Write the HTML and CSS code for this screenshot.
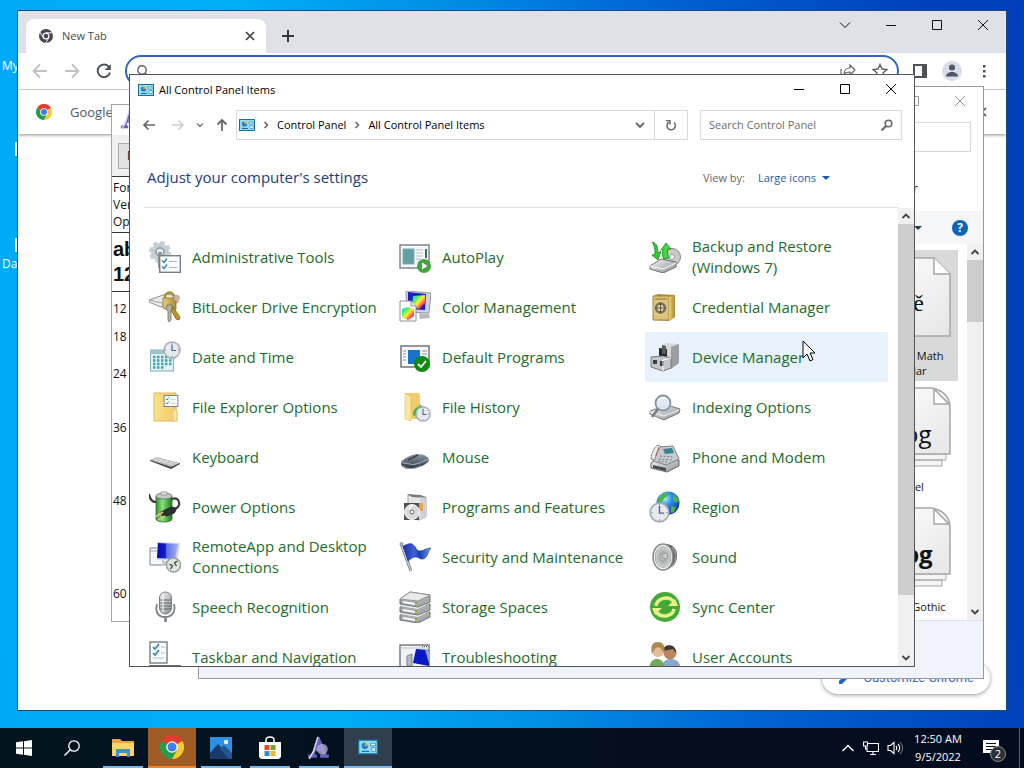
FILE: index.html
```
<!DOCTYPE html>
<html lang="en">
<head>
    <meta charset="UTF-8">
    <meta name="viewport" content="width=device-width, initial-scale=1.0">
    <title>All Control Panel Items</title>
    <link rel="stylesheet" href="styles.css">
</head>
<body>
    <!-- shared gradients and symbols -->
    <svg class="defs" aria-hidden="true">
        <defs>
            <linearGradient id="gSilver" x1="0" y1="0" x2="1" y2="1"><stop offset="0" stop-color="#f6f6f6"/><stop offset="1" stop-color="#8b8f94"/></linearGradient>
            <linearGradient id="gPage" x1="0" y1="0" x2="1" y2="1"><stop offset="0" stop-color="#fff"/><stop offset="1" stop-color="#e6e6e8"/></linearGradient>
            <linearGradient id="gGold" x1="0" y1="0" x2="1" y2="0"><stop offset="0" stop-color="#e8cf7d"/><stop offset="1" stop-color="#a98a35"/></linearGradient>
            <linearGradient id="gFolder" x1="0" y1="0" x2="1" y2="0"><stop offset="0" stop-color="#fbe08a"/><stop offset="1" stop-color="#f0cc69"/></linearGradient>
            <linearGradient id="gScreen" x1="0" y1="0" x2="1" y2="0"><stop offset="0" stop-color="#0408a8"/><stop offset=".4" stop-color="#1420d0"/><stop offset=".45" stop-color="#5a70e4"/><stop offset="1" stop-color="#a4b4f6"/></linearGradient>
            <linearGradient id="gGreen" x1="0" y1="0" x2="1" y2="0"><stop offset="0" stop-color="#2f8f2c"/><stop offset=".4" stop-color="#8be07c"/><stop offset="1" stop-color="#1f7a20"/></linearGradient>
            <linearGradient id="gFlag" x1="0" y1="0" x2="1" y2="0"><stop offset="0" stop-color="#1c30a4"/><stop offset=".4" stop-color="#3a63d8"/><stop offset=".6" stop-color="#1c3cae"/><stop offset="1" stop-color="#69a0ee"/></linearGradient>
            <linearGradient id="gRainbow" x1="0" y1="0" x2="1" y2="1"><stop offset="0" stop-color="#18c8ff"/><stop offset=".3" stop-color="#50f060"/><stop offset=".5" stop-color="#fff03c"/><stop offset=".75" stop-color="#ff4a4a"/><stop offset="1" stop-color="#f030d0"/></linearGradient>
            <linearGradient id="gMouse" x1="0" y1="0" x2="0" y2="1"><stop offset="0" stop-color="#8e9cab"/><stop offset="1" stop-color="#2c343c"/></linearGradient>
            <radialGradient id="gGlobe" cx=".35" cy=".3" r=".8"><stop offset="0" stop-color="#b6f2ff"/><stop offset=".4" stop-color="#2f8ce8"/><stop offset="1" stop-color="#082a94"/></radialGradient>
            <radialGradient id="gCone"><stop offset="0" stop-color="#f4f4f4"/><stop offset=".35" stop-color="#a5a9a8"/><stop offset="1" stop-color="#d3d5d4"/></radialGradient>
            <symbol id="panel" viewBox="0 0 16 14">
                <rect x=".5" y="1.5" width="15" height="11" fill="#8fdcf8" stroke="#1b6f9f"/>
                <circle cx="5.5" cy="6" r="2.7" fill="#fff"/><path d="M5.500 6V3.300a2.700 2.700 0 0 1 2.700 2.700z" fill="#e4a12c"/><path d="M5.500 6h2.700a2.700 2.700 0 1 1-2.700-2.700z" fill="#2a7fc0"/>
                <path d="M10 4h4v2h-4zM11 7.500h3v3h-3z" fill="#e9f9ff" stroke="#3c8fb8" stroke-width=".7"/><path d="M3 10.500h6" stroke="#1b6f9f"/>
            </symbol>
            <symbol id="chrome" viewBox="0 0 24 24">
                <path d="M12 12 1.600 6A12 12 0 0 1 22.400 6z" fill="#e53a2e"/><path d="M12 12 1.600 6A12 12 0 0 0 12 24l5-9z" fill="#279c4e"/><path d="M12 12 22.400 6A12 12 0 0 1 12 24l5-9z" fill="#fbc92d"/>
                <circle cx="12" cy="12" r="5.800" fill="#fff"/><circle cx="12" cy="12" r="4.500" fill="#3f7ff0"/>
            </symbol>
            <symbol id="min" viewBox="0 0 12 12"><path d="M1 6.500h10" stroke="currentColor"/></symbol>
            <symbol id="max" viewBox="0 0 12 12"><path d="M1.500 1.500h9v9h-9z" fill="none" stroke="currentColor"/></symbol>
            <symbol id="close" viewBox="0 0 12 12"><path d="M1 1l10 10M11 1 1 11" stroke="currentColor"/></symbol>
            <symbol id="clock" viewBox="0 0 18 18"><circle cx="9" cy="9" r="8" fill="#e6eaef" stroke="#a6acb6" stroke-width="1.500"/><path d="M9 3.500V9.500h4" fill="none" stroke="#4e6480" stroke-width="1.200"/><path d="M9 2v1M9 15v1M2 9h1M15 9h1" stroke="#888"/></symbol>
            <symbol id="checks" viewBox="0 0 22 18"><rect x=".7" y=".7" width="20.600" height="16.600" fill="#fafdff" stroke="#777e86" stroke-width="1.400"/><path d="M3 5.500l2 2 3-4M3 11.500l2 2 3-4" fill="none" stroke="#2d82b4" stroke-width="1.400"/><path d="M10 6.500h8M10 12.500h8" stroke="#aab4c0"/></symbol>
            <symbol id="fontpage" viewBox="0 0 84 84">
                <path d="M2 2h64l16 16v62H2z" fill="url(#gPage)" stroke="#a6a6a8" stroke-width="1.500"/><path d="M66 2v16h16" fill="#fff" stroke="#a6a6a8" stroke-width="1.500"/>
            </symbol>
            <symbol id="fontstack" viewBox="0 0 84 84">
                <path d="M10 73h64v6H10zM6 67h72v6H6z" fill="#f4f4f4" stroke="#a6a6a8"/>
                <path d="M2 1h62q18 4 18 20v46H2z" fill="url(#gPage)" stroke="#a6a6a8" stroke-width="1.500"/><path d="M66 2v15h15z" fill="#fff" stroke="#a6a6a8" stroke-width="1.500"/>
            </symbol>
            <symbol id="afont" viewBox="0 0 20 22">
                <path d="M10 0 3 17H0v3h8v-3H6l1-3h5l1 3h-2v3h8v-3h-2z" fill="#6a60c0"/><circle cx="13" cy="12" r="5" fill="#b0a8d8" opacity=".8"/><path d="M9 1 5 14l-4 7" stroke="#d8d4f0" stroke-width="1.500" fill="none"/>
            </symbol>
        </defs>
    </svg>

    <main class="desktop">
        <!-- desktop shortcuts -->
        <ul class="shortcuts">
            <li><span class="shortcut-label">My files</span></li>
            <li><span class="shortcut-icon"></span></li>
            <li><span class="shortcut-icon"></span><span class="shortcut-label">Data</span></li>
        </ul>

        <!-- browser -->
        <section class="window browser">
            <div class="tab-strip">
                <div class="tab">
                    <svg class="i14" viewBox="0 0 24 24"><circle cx="12" cy="12" r="12" fill="#45494d"/><circle cx="12" cy="12" r="6" fill="#fff"/><circle cx="12" cy="12" r="4" fill="#45494d"/><path d="M12 6.500h11M7.200 14.800 1.800 5.500M16.800 14.800 11.500 24" stroke="#fff" stroke-width="1.600"/></svg>
                    <span class="tab-title">New Tab</span>
                    <button class="plain" aria-label="Close tab"><svg class="i12" viewBox="0 0 12 12"><path d="M2 2l8 8M10 2l-8 8" stroke="#3c4043" stroke-width="1.700"/></svg></button>
                </div>
                <button class="plain new-tab" aria-label="New tab"><svg class="i14" viewBox="0 0 14 14"><path d="M7 1v12M1 7h12" stroke="#33373b" stroke-width="2"/></svg></button>
                <div class="window-buttons">
                    <button aria-label="Search tabs"><svg class="i12" viewBox="0 0 12 12"><path d="M1 3.500l5 5 5-5" fill="none" stroke="currentColor"/></svg></button>
                    <button aria-label="Minimize"><svg class="i12"><use href="#min"/></svg></button>
                    <button aria-label="Maximize"><svg class="i12"><use href="#max"/></svg></button>
                    <button aria-label="Close"><svg class="i12"><use href="#close"/></svg></button>
                </div>
            </div>
            <div class="toolbar">
                <button class="plain tool" aria-label="Back"><svg class="i16" viewBox="0 0 16 16"><path d="M15 8H2M8 1.500 1.500 8 8 14.500" fill="none" stroke="#bdc1c4" stroke-width="1.800"/></svg></button>
                <button class="plain tool" aria-label="Forward"><svg class="i16" viewBox="0 0 16 16"><path d="M1 8h13M8 1.500 14.500 8 8 14.500" fill="none" stroke="#bdc1c4" stroke-width="1.800"/></svg></button>
                <button class="plain tool" aria-label="Reload"><svg class="i16" viewBox="0 0 16 16"><path d="M13 4A6.300 6.300 0 1 0 14 9.500" fill="none" stroke="#4d5256" stroke-width="1.900"/><path d="M14.800 1v6H8.800z" fill="#4d5256"/></svg></button>
                <div class="omnibox">
                    <svg class="i14" viewBox="0 0 14 14"><circle cx="6" cy="6" r="4.200" fill="none" stroke="#5f6368" stroke-width="1.400"/><path d="M9 9l4 4" stroke="#5f6368" stroke-width="1.600"/></svg>
                    <input type="text" aria-label="Address">
                    <svg class="i16" viewBox="0 0 16 16"><path d="M1 6v9h12M4 11c0-4 3-6 6-6V2l5 5-5 5V9c-3 0-4.500.500-6 2z" fill="none" stroke="#5f6368" stroke-width="1.200"/></svg>
                    <svg class="i16" viewBox="0 0 16 16"><path d="M8 1.500l2 4.500 5 .500-3.800 3.300L12.400 15 8 12.200 3.600 15l1.200-5.200L1 6.500 6 6z" fill="none" stroke="#5f6368" stroke-width="1.400"/></svg>
                </div>
                <button class="plain tool" aria-label="Side panel"><svg class="i14" viewBox="0 0 14 14"><path d="M1 1h12v12H1z" fill="#fff" stroke="#4d5256" stroke-width="2"/><path d="M9 1h4v12H9z" fill="#4d5256"/></svg></button>
                <button class="plain tool avatar" aria-label="Profile"><svg class="i20" viewBox="0 0 20 20"><circle cx="10" cy="10" r="10" fill="#dadde8"/><circle cx="10" cy="6.500" r="3" fill="#4f5565"/><path d="M4 15.500c0-6 12-6 12 0z" fill="#4f5565"/></svg></button>
                <button class="plain tool" aria-label="Menu"><svg class="i14" viewBox="0 0 14 14"><path d="M6 1h2.500v2.500H6zM6 6h2.500v2.500H6zM6 11h2.500v2.500H6z" fill="#4d5256"/></svg></button>
            </div>
            <div class="infobar">
                <svg class="i16"><use href="#chrome"/></svg>
                <span>Google Chrome</span>
                <button class="plain infobar-close" aria-label="Dismiss"><svg class="i12" viewBox="0 0 12 12"><path d="M2 2l8 8M10 2l-8 8" stroke="#4d5256" stroke-width="1.700"/></svg></button>
            </div>
            <div class="page">
                <button class="customize"><svg class="i14" viewBox="0 0 14 14"><path d="M1 13V10l8-8 3 3-8 8z" fill="#1967d2"/></svg>Customize Chrome</button>
            </div>
        </section>

        <!-- font preview -->
        <section class="window preview">
            <div class="preview-title"><svg class="i20"><use href="#afont"/></svg></div>
            <div class="preview-bar"><button>Print</button></div>
            <div class="preview-meta">
                <p>Font</p>
                <p>Version</p>
                <p>OpenType</p>
            </div>
            <div class="preview-sample">
                <p>abcdef</p>
                <p>123456</p>
            </div>
            <ul class="preview-sizes">
                <li class="s12">12</li>
                <li class="s18">18</li>
                <li class="s24">24</li>
                <li class="s36">36</li>
                <li class="s48">48</li>
                <li class="s60">60</li>
            </ul>
        </section>

        <!-- fonts folder -->
        <section class="window fonts">
            <div class="title-bar inactive">
                <div class="window-buttons">
                    <button aria-label="Maximize"><svg class="i12"><use href="#max"/></svg></button>
                    <button aria-label="Close"><svg class="i12"><use href="#close"/></svg></button>
                </div>
            </div>
            <div class="fonts-nav"><input type="text" aria-label="Search Fonts"></div>
            <div class="fonts-head">computer</div>
            <div class="fonts-tools">
                <svg class="i8" viewBox="0 0 8 8"><path d="M0 2h8L4 6z" fill="#243a52"/></svg>
                <button class="help" aria-label="Help">?</button>
            </div>
            <div class="fonts-body">
                <div class="fonts-list">
                    <figure class="font selected">
                        <div class="font-icon"><svg><use href="#fontpage"/></svg><span class="glyph serif">Áě</span></div>
                        <figcaption>Cambria Math<br>Regular</figcaption>
                    </figure>
                    <figure class="font">
                        <div class="font-icon"><svg><use href="#fontstack"/></svg><span class="glyph">Abg</span></div>
                        <figcaption>Corbel</figcaption>
                    </figure>
                    <figure class="font">
                        <div class="font-icon"><svg><use href="#fontstack"/></svg><span class="glyph bold">Abg</span></div>
                        <figcaption>Franklin Gothic</figcaption>
                    </figure>
                </div>
                <div class="scrollbar">
                    <svg class="i16" viewBox="0 0 16 16"><path d="M4.500 10 8 6.500 11.500 10" fill="none" stroke="#444" stroke-width="1.800"/></svg>
                    <div class="track"><div class="thumb thumb-short"></div></div>
                    <svg class="i16" viewBox="0 0 16 16"><path d="M4.500 6 8 9.500 11.500 6" fill="none" stroke="#444" stroke-width="1.800"/></svg>
                </div>
            </div>
            <div class="fonts-details"></div>
        </section>

        <!-- control panel -->
        <section class="window control-panel">
            <div class="title-bar">
                <svg class="i16"><use href="#panel"/></svg>
                <span>All Control Panel Items</span>
                <div class="window-buttons">
                    <button aria-label="Minimize"><svg class="i12"><use href="#min"/></svg></button>
                    <button aria-label="Maximize"><svg class="i12"><use href="#max"/></svg></button>
                    <button aria-label="Close"><svg class="i12"><use href="#close"/></svg></button>
                </div>
            </div>
            <nav class="nav-bar">
                <div class="history">
                    <button class="plain" aria-label="Back"><svg class="i14" viewBox="0 0 14 14"><path d="M13 7H2M6.500 2.500 2 7l4.500 4.500" fill="none" stroke="#666" stroke-width="1.700"/></svg></button>
                    <button class="plain" aria-label="Forward"><svg class="i14" viewBox="0 0 14 14"><path d="M1 7h11M7.500 2.500 12 7l-4.500 4.500" fill="none" stroke="#ccc" stroke-width="1.500"/></svg></button>
                    <button class="plain" aria-label="Recent locations"><svg class="i8" viewBox="0 0 8 8"><path d="M1 2.500l3 3 3-3" fill="none" stroke="#777" stroke-width="1.400"/></svg></button>
                    <button class="plain" aria-label="Up"><svg class="i14" viewBox="0 0 14 14"><path d="M7 13V2M2.500 6.500 7 2l4.500 4.500" fill="none" stroke="#666" stroke-width="1.800"/></svg></button>
                </div>
                <div class="address">
                    <svg class="i16"><use href="#panel"/></svg>
                    <svg class="i8" viewBox="0 0 8 8"><path d="M2.500 1l3 3-3 3" fill="none" stroke="#666" stroke-width="1.500"/></svg>
                    <a href="#">Control Panel</a>
                    <svg class="i8" viewBox="0 0 8 8"><path d="M2.500 1l3 3-3 3" fill="none" stroke="#666" stroke-width="1.500"/></svg>
                    <a href="#">All Control Panel Items</a>
                    <button class="plain previous" aria-label="Previous locations"><svg class="i12" viewBox="0 0 12 12"><path d="M2 4l4 4 4-4" fill="none" stroke="#666" stroke-width="1.800"/></svg></button>
                    <button class="plain refresh" aria-label="Refresh"><svg class="i12" viewBox="0 0 12 12"><path d="M4 3A4.200 4.200 0 1 0 9 3.500" fill="none" stroke="#666" stroke-width="1.500"/><path d="M1 1.700h4v4" fill="none" stroke="#666" stroke-width="1.300"/></svg></button>
                </div>
                <div class="search">
                    <input type="text" placeholder="Search Control Panel" aria-label="Search Control Panel">
                    <svg class="i12" viewBox="0 0 12 12"><circle cx="7.500" cy="4.500" r="3.300" fill="none" stroke="#666" stroke-width="1.600"/><path d="M5 7 .500 11.500" stroke="#666" stroke-width="2"/></svg>
                </div>
            </nav>
            <header class="heading">
                <h1>Adjust your computer's settings</h1>
                <div class="view">
                    <label for="viewBy">View by:</label>
                    <select id="viewBy"><option>Large icons</option></select>
                    <svg class="i8" viewBox="0 0 8 8"><path d="M0 2h8L4 6z" fill="#1a5ba5"/></svg>
                </div>
            </header>
            <div class="panel-body">
                <div class="items">
                    <a class="item" href="#">
                        <svg class="icon" viewBox="0 0 32 32"><circle cx="11" cy="11" r="6.500" fill="none" stroke="#c6ced5" stroke-width="5"/><circle cx="11" cy="11" r="9.500" fill="none" stroke="#c6ced5" stroke-width="3" stroke-dasharray="4.500 2.960"/><circle cx="11" cy="11" r="4" fill="#e9edf0" stroke="#8d98a1" stroke-width="1.500"/><path d="M9 11h4v16H9z" fill="#8f9aa3"/><use href="#checks" x="10" y="14" width="22" height="18"/></svg>
                        <span>Administrative Tools</span>
                    </a>
                    <a class="item" href="#">
                        <svg class="icon" viewBox="0 0 32 32"><rect x="1" y="4" width="29" height="23" fill="#f7f8fa" stroke="#7e8790" stroke-width="1.500"/><rect x="4" y="8" width="11" height="15" fill="#5fa0a0" stroke="#86a4b8"/><path d="M17 9h7M17 12h7M17 15h7M17 18h5" stroke="#b5bcc4"/><path d="M26 8h2v9h-2z" fill="#3c6f5c"/><circle cx="25" cy="25" r="7" fill="#3fa63a"/><path d="M23 21.500v7l5.500-3.500z" fill="#fff"/></svg>
                        <span>AutoPlay</span>
                    </a>
                    <a class="item" href="#">
                        <svg class="icon" viewBox="0 0 32 32"><circle cx="23" cy="16" r="8.500" fill="#c9ccc8" stroke="#84888a"/><circle cx="23" cy="16" r="2.500" fill="#fff" stroke="#999"/><path d="M1 25l11-7 15 3v5l-13 6-13-4z" fill="url(#gSilver)" stroke="#6d7175"/><path d="M1 25l13 3 13-6" fill="none" stroke="#fff"/><path d="M3 1c5 1 6 6 6 11l3-2-3 9-6-5 3-.500C6 9 6 5 3 1z" fill="#37c837" stroke="#178c1c" stroke-width=".8"/><path d="M15 18c-2-3-2-7-1-10l-2 1 5-7 5 6h-3c-1 4 0 7 1 9z" fill="#46d246" stroke="#178c1c" stroke-width=".8"/></svg>
                        <span>Backup and Restore<br>(Windows 7)</span>
                    </a>
                    <a class="item" href="#">
                        <svg class="icon" viewBox="0 0 32 32"><path d="M0 9 17 3l12 2v6l-17 5-12-5z" fill="#e9e9e9" stroke="#8e8e8e"/><path d="M0 9l13 3 16-6" fill="none" stroke="#a5a5a5"/><circle cx="20.500" cy="6" r="4.500" fill="none" stroke="#a98c40" stroke-width="2.500"/><path d="M14 7h13v11l-6 2-7-3z" fill="url(#gGold)" stroke="#8f7020" stroke-width=".8"/><path d="M18 14h5v4l-1 2v9l-2 2-1-2v-9l-2-2z" fill="#b9b2a4" stroke="#77705e" stroke-width=".8"/><path d="M24 16l7 10-1 3-3-1-5-9z" fill="#b89526" stroke="#7e6418" stroke-width=".8"/><circle cx="28" cy="7" r="3" fill="#c9b4a4"/></svg>
                        <span>BitLocker Drive Encryption</span>
                    </a>
                    <a class="item" href="#">
                        <svg class="icon" viewBox="0 0 32 32"><path d="M7 0l25 2-2 20-22-1z" fill="#cfd2e4" stroke="#9295ac"/><path d="M9 1l18 2-1 16-17-1z" fill="#1a20b8"/><path d="M14 5l12-1v8l-6 6-7-3z" fill="url(#gRainbow)"/><path d="M20 22l10 1 1 4-10 1z" fill="#b6bac0"/><path d="M1 10h11l5 5v15H1z" fill="#fff" stroke="#8b8f95"/><path d="M12 10v5h5" fill="#eee" stroke="#8b8f95"/><path d="M3 18l6-2 6 2v7l-6 4-6-3z" fill="url(#gRainbow)"/></svg>
                        <span>Color Management</span>
                    </a>
                    <a class="item" href="#">
                        <svg class="icon" viewBox="0 0 32 32"><path d="M4 5l5-2 17 1v22l-6 4-16-1z" fill="#b08f3c"/><path d="M4 5h16v24H4z" fill="#dcc377" stroke="#a58435"/><path d="M20 6l6-2v22l-6 3z" fill="url(#gGold)"/><circle cx="11.500" cy="17" r="6.500" fill="#8d7a4c" stroke="#f0dca0"/><circle cx="11.500" cy="17" r="4" fill="#d8d4c8" stroke="#65583a"/><path d="M11.500 11v12M5.500 17h12" stroke="#65583a"/><path d="M6 8h12" stroke="#8d7335"/></svg>
                        <span>Credential Manager</span>
                    </a>
                    <a class="item" href="#">
                        <svg class="icon" viewBox="0 0 32 32"><rect x="1.500" y="9" width="23" height="21" fill="#e3f4f6" stroke="#7faeb6"/><path d="M1 9h24v4H1z" fill="#9cc4cc"/><path d="M4 16h19M4 19.500h19M4 23h19M4 26.500h12" stroke="#3ca6b0" stroke-width="2.300" stroke-dasharray="2.500 1.500"/><use href="#clock" x="14" y="0" width="18" height="18"/></svg>
                        <span>Date and Time</span>
                    </a>
                    <a class="item" href="#">
                        <svg class="icon" viewBox="0 0 32 32"><rect x="2" y="5" width="28" height="21" fill="#f7f8fa" stroke="#6f7780" stroke-width="1.500"/><rect x="9" y="9" width="12" height="14" fill="#1673d0"/><path d="M4 10h3M4 13h3M4 16h3M4 19h3M23 10h5M23 13h5" stroke="#8b939c"/><circle cx="23" cy="23" r="8" fill="#0f8a12"/><path d="M19 23l3 3 5-6" fill="none" stroke="#fff" stroke-width="1.800"/></svg>
                        <span>Default Programs</span>
                    </a>
                    <a class="item hover" href="#">
                        <svg class="icon" viewBox="0 0 32 32"><path d="M12 5l5-3 13 1v19l-9 6-9-4z" fill="#d5d7d9"/><path d="M22 6l8-3v19l-8 6z" fill="#9b9ea2"/><path d="M10 7l8 1v9l-8-2z" fill="#23272b"/><path d="M13 4l4 1v8h-4z" fill="#555b61"/><path d="M2 16l12-1 8 2v10l-8 3-12-4z" fill="#c3c6ca" stroke="#74787c"/><path d="M4 19h4v4H4zM11 20h4v5h-4z" fill="#3a3e42"/><path d="M14 30V19l8-2" fill="none" stroke="#fff"/></svg>
                        <span>Device Manager</span>
                        <svg class="cursor" viewBox="0 0 14 22"><path d="M1 1v17l4-4 3 7 3-1.500-3-6.500h5z" fill="#fff" stroke="#000"/></svg>
                    </a>
                    <a class="item" href="#">
                        <svg class="icon" viewBox="0 0 32 32"><path d="M5 2h22v17l1 2v9H5z" fill="url(#gFolder)" stroke="#dcb95c"/><path d="M24 30v-9l2-4 2 4v9z" fill="#fae9a8" stroke="#dcb95c" stroke-width=".6"/><use href="#checks" x="14" y="4" width="16" height="12"/></svg>
                        <span>File Explorer Options</span>
                    </a>
                    <a class="item" href="#">
                        <svg class="icon" viewBox="0 0 32 32"><path d="M6 2h14l1 2v24H6z" fill="#efcd6c"/><path d="M6 2l6 4v24l-6-2z" fill="#fbe6a0" stroke="#e0bd60" stroke-width=".6"/><path d="M14 24c0-5 3-8 7-9l-1-2 6 4-5 3c-2 1-3 3-3 6z" fill="#3fae45"/><use href="#clock" x="16" y="15" width="16" height="16"/></svg>
                        <span>File History</span>
                    </a>
                    <a class="item" href="#">
                        <svg class="icon" viewBox="0 0 32 32"><path d="M1 20l17-6 13 4-1 4-15 7-14-6z" fill="url(#gSilver)" stroke="#74787c"/><path d="M1 21l14 4 15-6" fill="none" stroke="#f7f7f7"/><circle cx="14" cy="12" r="7.500" fill="#dbe9f8" fill-opacity=".9" stroke="#8793a0" stroke-width="1.800"/><path d="M9 18 3 26" stroke="#747b82" stroke-width="2.500"/><path d="M10 9c2-3 5-3 7-1" fill="none" stroke="#fff" stroke-width="1.500"/></svg>
                        <span>Indexing Options</span>
                    </a>
                    <a class="item" href="#">
                        <svg class="icon" viewBox="0 0 32 32"><path d="M1 19l7-3 23 6-9 5z" fill="#b4b6b8"/><path d="M1 19l21 7 9-4v1l-9 5L1 20z" fill="#3d4043"/><path d="M5 19l20 5M8 18l20 4.500M9 16.500l-4 2.500M14 18l-4 2.500M19 19.500l-4 2.500M24 21l-4 2.500" stroke="#e7e7e7" stroke-width=".8"/></svg>
                        <span>Keyboard</span>
                    </a>
                    <a class="item" href="#">
                        <svg class="icon" viewBox="0 0 32 32"><path d="M2 22c0-3 10-9 17-9 6 0 11 3 11 6s-11 9-18 9C6 28 2 26 2 22z" fill="url(#gMouse)"/><path d="M3 22c5-1 9 3 14 1 6-2 10-4 13-5" fill="none" stroke="#98a8b8" stroke-width="1.200"/><path d="M9 19l10-5" stroke="#3a444e" stroke-width="1.500"/><path d="M4 25c4 4 12 3 18 0" fill="none" stroke="#c8d0d8" stroke-width=".8"/></svg>
                        <span>Mouse</span>
                    </a>
                    <a class="item" href="#">
                        <svg class="icon" viewBox="0 0 32 32"><path d="M2 22l6-4 22 1v6l-12 6-16-4z" fill="url(#gSilver)" stroke="#63676b"/><path d="M4 24l13 3v3L4 27z" fill="#45494d"/><path d="M8 6l16-1 6 13-13 6-13-4z" fill="#c5cbd0" stroke="#7d838a"/><path d="M14 8l9-1 2 5-9 1z" fill="#36848e"/><path d="M11 15l13 1M10 18l13 1M9 20l9 1" stroke="#777d83" stroke-dasharray="2 1.500"/><path d="M2 18c0-6 4-13 7-14l3 2c-3 3-6 8-6 13z" fill="#e6e8ea" stroke="#888d92"/><path d="M10 6 7 15" stroke="#b55656"/></svg>
                        <span>Phone and Modem</span>
                    </a>
                    <a class="item" href="#">
                        <svg class="icon" viewBox="0 0 32 32"><path d="M0 3c1 6 3 8 7 8M22 9c5-4 9 0 8 5-1 4-6 4-8 7" fill="none" stroke="#36383a" stroke-width="2.200"/><path d="M7 5h16v23c0 4-16 4-16 0z" fill="url(#gGreen)" stroke="#28702a" stroke-width=".8"/><ellipse cx="15" cy="5" rx="8" ry="3" fill="#c5cbc7" stroke="#777d79"/><path d="M12 1h6v3h-6z" fill="#e2e5e3" stroke="#999"/><path d="M11 21l10-5c5-1 7 1 6 4-2 4-9 6-14 5z" fill="#2d3033"/><path d="M14 21l-8 5M16 25l-7 4" stroke="#d9c285" stroke-width="1.800"/></svg>
                        <span>Power Options</span>
                    </a>
                    <a class="item" href="#">
                        <svg class="icon" viewBox="0 0 32 32"><path d="M9 4l13 1 5 1v20l-7 3-11-2z" fill="#e5e5e6" stroke="#a4a6a9"/><path d="M8 3l14 1 5 3-14-1z" fill="#777b80"/><path d="M21 6l6 1v20l-6 2z" fill="#cfd1d4"/><path d="M18 12h6v8h-6z" fill="#efa24a"/><path d="M5 12h15v17H5z" fill="#4b4e52"/><circle cx="13" cy="21" r="7.500" fill="#d8dbda" stroke="#f5f5f5"/><circle cx="13" cy="21" r="2" fill="#fff" stroke="#666"/><path d="M13 14l-3 4" stroke="#fff" stroke-width="2"/></svg>
                        <span>Programs and Features</span>
                    </a>
                    <a class="item" href="#">
                        <svg class="icon" viewBox="0 0 32 32"><circle cx="19" cy="12" r="11.500" fill="url(#gGlobe)"/><path d="M10 7c3-5 8-6 9-4s-3 3-5 6-3 3-5 2 0-2 1-4zM24 3c3 2 5 4 6 7l-3 2-3-3zM22 15l5 1-2 5-3 1z" fill="#49b83e"/><use href="#clock" x="0" y="11" width="21" height="21"/></svg>
                        <span>Region</span>
                    </a>
                    <a class="item" href="#">
                        <svg class="icon" viewBox="0 0 32 32"><path d="M1 7h13v17H1z" fill="#f5f6fa" stroke="#7d8492"/><path d="M1 10h13" stroke="#a0a6b2"/><path d="M8 1l23 1-3 18-20-1z" fill="#cfd4e8"/><path d="M9 2l20 1-3 15-18-1z" fill="url(#gScreen)"/><path d="M13 20h7v5h-7z" fill="#c7cad2"/><circle cx="24.500" cy="24" r="7" fill="#dfe5df" stroke="#98a398" stroke-width="1.500"/><path d="M20.500 23l3 2-2 3M28.500 20l-3 2 2 3" fill="none" stroke="#39423b" stroke-width="1.300"/></svg>
                        <span>RemoteApp and Desktop<br>Connections</span>
                    </a>
                    <a class="item" href="#">
                        <svg class="icon" viewBox="0 0 32 32"><path d="M2 3l10 27" stroke="#74808f" stroke-width="2.800"/><path d="M2 3l10 27" stroke="#dfe3e8" stroke-width="1"/><circle cx="2.500" cy="3" r="2" fill="#9fa9b6"/><path d="M4 5c5-2 7-3 9-2 4 2 4 7 8 7 4 0 6-3 11-3-3 3-3 8-6 10-4 3-6-1-9-1-4 0-5 2-8 4z" fill="url(#gFlag)" stroke="#1c2f8c" stroke-width=".6"/></svg>
                        <span>Security and Maintenance</span>
                    </a>
                    <a class="item" href="#">
                        <svg class="icon" viewBox="0 0 32 32"><path d="M15 3c8-1 13 5 13 11s-2 11-11 15z" fill="#55585a"/><path d="M23 6c5 6 5 14 0 19" fill="none" stroke="#8f9294" stroke-width="2"/><ellipse cx="14" cy="16" rx="10" ry="13" fill="#f2f2f2" stroke="#898c8d" stroke-width="1.500"/><ellipse cx="14" cy="16" rx="7.800" ry="10.500" fill="url(#gCone)" stroke="#adb0b0"/><circle cx="16" cy="15" r="3" fill="#c6c9c8" stroke="#999"/></svg>
                        <span>Sound</span>
                    </a>
                    <a class="item" href="#">
                        <svg class="icon" viewBox="0 0 32 32"><path d="M8 13c-2 8 1 13 8 13s11-5 9-13" fill="none" stroke="#7d8086" stroke-width="1.800"/><path d="M15 26h3v5h-3z" fill="#8d9096"/><rect x="10.500" y="1" width="12" height="22" rx="6" fill="url(#gSilver)" stroke="#777a80"/><path d="M11 9h11M11 12h11M11 15h11M11 18h11" stroke="#62666d"/><path d="M14 3v18" stroke="#fff" stroke-width="1.500" opacity=".7"/></svg>
                        <span>Speech Recognition</span>
                    </a>
                    <a class="item" href="#">
                        <svg class="icon" viewBox="0 0 32 32"><path d="M1 24l8-4 22 1v5l-12 6-18-3z" fill="#a7aaac" stroke="#6e7173"/><path d="M1 23l8-4 22 1-12 6z" fill="#eee"/><path d="M1 16l8-4 22 1v6l-12 5-18-3z" fill="#a7aaac" stroke="#6e7173"/><path d="M1 15l8-4 22 1-12 6z" fill="#eee"/><path d="M1 8l10-7 20 3v7l-12 5-18-3z" fill="#a7aaac" stroke="#6e7173"/><path d="M1 8l10-7 20 3-12 6z" fill="#e9e9ea" stroke="#999"/><path d="M4 11l12 2M4 19l12 2M4 27l12 2" stroke="#f7f7f7" stroke-width="2"/><path d="M17 11v3M17 19v3M17 27v3" stroke="#9dae33" stroke-width="2"/></svg>
                        <span>Storage Spaces</span>
                    </a>
                    <a class="item" href="#">
                        <svg class="icon" viewBox="0 0 32 32"><circle cx="16" cy="16" r="15" fill="#43ab35"/><path d="M7 15c1-8 13-11 18-4" fill="none" stroke="#e8f08c" stroke-width="3.500"/><path d="M19 15h10l-3-7z" fill="#e8f08c"/><path d="M25 18c-1 7-12 10-18 3" fill="none" stroke="#e8f08c" stroke-width="3.500"/><path d="M13 17H3l3 7z" fill="#e8f08c"/></svg>
                        <span>Sync Center</span>
                    </a>
                    <a class="item" href="#">
                        <svg class="icon" viewBox="0 0 32 32"><rect x="1" y="1" width="17" height="21" fill="#fafdff" stroke="#777e86" stroke-width="1.400"/><path d="M4 6l2 2 4-5M4 12l2 2 4-5" fill="none" stroke="#2d82b4" stroke-width="1.600"/><path d="M12 6h4M12 12h4M4 17h11" stroke="#a8bccc"/><path d="M0 24h32v8H0z" fill="#6c7278"/></svg>
                        <span>Taskbar and Navigation</span>
                    </a>
                    <a class="item" href="#">
                        <svg class="icon" viewBox="0 0 32 32"><rect x="1" y="4" width="29" height="27" fill="#f1f2f5" stroke="#6f757d" stroke-width="1.400"/><path d="M1 7h29" stroke="#c0c4ca"/><path d="M23 5.500h5" stroke="#555" stroke-dasharray="1 1"/><path d="M17 8l13 1v16l-16-3z" fill="#0c18c4"/><path d="M26 9l4 .500V22z" fill="#8fa2f0"/><path d="M8 15l5-2v12H8z" fill="#b5bac2" stroke="#7b828c"/></svg>
                        <span>Troubleshooting</span>
                    </a>
                    <a class="item" href="#">
                        <svg class="icon" viewBox="0 0 32 32"><path d="M13 29c0-8 3-11 9-11s9 3 10 11z" fill="#88a9cf"/><circle cx="21" cy="12" r="6.500" fill="#b98662"/><path d="M14 10c0-8 14-8 13 2l-3-4z" fill="#3c3a38"/><path d="M0 30c0-8 3-12 8-12s8 4 8 12z" fill="#74a85b"/><circle cx="9" cy="10" r="6" fill="#e6bb99"/><path d="M3 13C1 4 4 1 9 1s8 4 6 11c-2-3-3-5-6-6-3 1-4 3-6 7z" fill="#ab8a56"/></svg>
                        <span>User Accounts</span>
                    </a>
                </div>
                <div class="scrollbar">
                    <svg class="i16" viewBox="0 0 16 16"><path d="M4.500 10 8 6.500 11.500 10" fill="none" stroke="#444" stroke-width="1.800"/></svg>
                    <div class="track"><div class="thumb thumb-long"></div></div>
                    <svg class="i16" viewBox="0 0 16 16"><path d="M4.500 6 8 9.500 11.500 6" fill="none" stroke="#444" stroke-width="1.800"/></svg>
                </div>
            </div>
        </section>
    </main>

    <!-- taskbar -->
    <footer class="taskbar">
        <button class="task" aria-label="Start"><svg class="i16" viewBox="0 0 16 16"><path d="M0 2.300 7 1.300v6.200H0zM8 1.200 16 0v7.500H8zM0 8.500h7v6.200L0 13.700zM8 8.500h8V16L8 14.800z" fill="#fff"/></svg></button>
        <button class="task" aria-label="Search"><svg class="i16" viewBox="0 0 16 16"><circle cx="10" cy="6" r="5.200" fill="none" stroke="#fff" stroke-width="1.300"/><path d="M6.300 9.700.5 15.500" stroke="#fff" stroke-width="1.400"/></svg></button>
        <div class="running">
            <button class="task open" aria-label="File Explorer"><svg class="i24" viewBox="0 0 24 24"><path d="M1 3h8l2 2h12v15H1z" fill="#e9a830"/><path d="M1 7h22v13H1z" fill="#fbd66b"/><path d="M5 13h14v8h-3v-4H8v4H5z" fill="#3f8fce"/></svg></button>
            <button class="task attention" aria-label="Google Chrome"><svg class="i24"><use href="#chrome"/></svg></button>
            <button class="task open" aria-label="Photos"><svg class="i24" viewBox="0 0 24 24"><path d="M1 1h22v22H1z" fill="#2f8fe0"/><path d="M1 17 9 8l14 15H1z" fill="#173a6e"/><path d="M11 13l4-4 8 8v6h-3z" fill="#28538e"/><circle cx="17" cy="6" r="2.200" fill="#e6f5ff"/></svg></button>
            <button class="task open" aria-label="Microsoft Store"><svg class="i24" viewBox="0 0 24 24"><path d="M8 7V4c0-4 8-4 8 0v3" fill="none" stroke="#fff" stroke-width="1.500"/><path d="M1 6h22v15l-2 2H3l-2-2z" fill="#fff"/><path d="M6.500 9H11.500v5H6.500z" fill="#d8502c"/><path d="M12.500 9h5v5h-5z" fill="#7ba427"/><path d="M6.500 15h5v5h-5z" fill="#2b8ed4"/><path d="M12.500 15h5v5h-5z" fill="#efb22a"/></svg></button>
            <button class="task open" aria-label="Font viewer"><svg class="i24"><use href="#afont"/></svg></button>
            <button class="task current" aria-label="Control Panel"><svg class="i20"><use href="#panel"/></svg></button>
        </div>
        <div class="tray">
            <button class="plain" aria-label="Show hidden icons"><svg class="i14" viewBox="0 0 14 14"><path d="M1.500 10 7 4.500 12.500 10" fill="none" stroke="#fff" stroke-width="1.400"/></svg></button>
            <button class="plain" aria-label="Network"><svg class="i16" viewBox="0 0 16 16"><path d="M5 3.500h10.500v8H4V7M7 14.500h6M10 12v2.500M.500 2h4v4h-4zM2.500 6v3H4" fill="none" stroke="#fff" stroke-width="1.100"/></svg></button>
            <button class="plain" aria-label="Volume"><svg class="i16" viewBox="0 0 16 16"><path d="M1 5.500h2.500L7 2.500v11L3.500 10.500H1zM9 6c1 1 1 3 0 4M11 4c2.200 2 2.200 6 0 8" fill="none" stroke="#fff" stroke-width="1.100"/><path d="M13 2c3.200 3 3.200 9 0 12" fill="none" stroke="#7d8792"/></svg></button>
            <div class="clock"><time>12:50 AM</time><time>9/5/2022</time></div>
            <button class="plain notices" aria-label="Notifications"><svg class="i16" viewBox="0 0 16 16"><path d="M0 0h16v13h-5l-3 3v-3H0z" fill="#fff"/><path d="M3 3.500h10M3 6.500h10M3 9.500h6" stroke="#06101f"/></svg><span class="badge">2</span></button>
            <button class="show-desktop" aria-label="Show desktop"></button>
        </div>
    </footer>
</body>
</html>
```
FILE: styles.css
```
* {
    box-sizing: border-box;
}

body {
    margin: 0;
    height: 100vh;
    display: flex;
    flex-direction: column;
    overflow: hidden;
    font-family: "Open Sans", "Noto Sans", "Segoe UI", sans-serif;
    font-size: 12px;
    line-height: 16px;
    color: #111;
}

h1, p, ul, figure {
    margin: 0;
    padding: 0;
}

ul {
    list-style: none;
}

a {
    color: inherit;
    text-decoration: none;
}

button, input, select {
    font: inherit;
    color: inherit;
    border: 0;
    padding: 0;
    background: none;
}

input:focus, select:focus {
    outline: none;
}

svg {
    flex: none;
    display: block;
}

.defs {
    position: absolute;
    width: 0;
    height: 0;
}

.plain {
    display: flex;
    align-items: center;
    justify-content: center;
}

/* icon sizes */
.i8 { width: 8px; height: 8px; }
.i12 { width: 12px; height: 12px; }
.i14 { width: 14px; height: 14px; }
.i16 { width: 16px; height: 16px; }
.i20 { width: 20px; height: 20px; }
.i24 { width: 24px; height: 24px; }

/* desktop */
.desktop {
    flex: 1;
    position: relative;
    overflow: hidden;
    background: linear-gradient(82deg, #00a8fa 0%, #00aef6 30%, #008fe8 48%, #0062d0 68%, #0042ba 90%, #003fb8 100%);
}

.shortcuts {
    padding: 58px 0 0 2px;
    color: #fff;
    font-size: 12px;
}

.shortcuts li {
    height: 84px;
}

.shortcut-label {
    display: block;
    white-space: nowrap;
}

.shortcut-icon {
    display: block;
    width: 24px;
    height: 14px;
    margin: 0 0 4px 13px;
    background: #fff;
}

.shortcuts li:nth-child(3) {
    padding-top: 12px;
}

/* windows */
.window {
    position: absolute;
    display: flex;
    flex-direction: column;
    overflow: hidden;
    background: #fff;
    border: 1px solid #777;
}

.window-buttons {
    display: flex;
    align-self: flex-start;
    margin-left: auto;
}

.window-buttons button {
    display: flex;
    align-items: center;
    justify-content: center;
    width: 46px;
    height: 28px;
}

.title-bar {
    display: flex;
    align-items: center;
    gap: 5px;
    height: 30px;
    padding-left: 8px;
}

.title-bar.inactive {
    color: #999;
}

/* browser */
.browser {
    inset: 10px 17px 17px;
    border-color: #1d4a78;
}

.tab-strip {
    display: flex;
    height: 42px;
    padding-left: 8px;
    background: #dee1e7;
}

.tab {
    display: flex;
    align-items: center;
    gap: 9px;
    width: 240px;
    margin-top: 8px;
    padding: 0 10px 0 13px;
    background: #fff;
    border-radius: 8px 8px 0 0;
    font-size: 11px;
    color: #45494d;
}

.tab-title {
    flex: 1;
}

.new-tab {
    width: 44px;
    margin-top: 8px;
}

.toolbar {
    display: flex;
    align-items: center;
    height: 37px;
    padding: 0 6px;
    border-bottom: 1px solid #dcdcdc;
}

.tool {
    width: 32px;
    height: 32px;
}

.omnibox {
    flex: 1;
    display: flex;
    align-items: center;
    gap: 16px;
    height: 32px;
    margin: 0 5px;
    padding: 0 9px;
    border: 2px solid #2f66bd;
    border-radius: 16px;
}

.omnibox input {
    flex: 1;
    min-width: 0;
}

.infobar {
    display: flex;
    align-items: center;
    gap: 18px;
    height: 44px;
    padding: 0 18px;
    font-size: 13px;
    color: #55595d;
    box-shadow: 0 1px 3px rgba(0, 0, 0, 0.45);
}

.infobar-close {
    margin-left: auto;
}

.page {
    flex: 1;
    display: flex;
    align-items: flex-end;
    justify-content: flex-end;
    padding: 16px;
}

.customize {
    display: flex;
    align-items: center;
    gap: 11px;
    height: 32px;
    padding: 0 16px;
    border-radius: 16px;
    box-shadow: 0 1px 4px rgba(0, 0, 0, 0.4);
    font-family: Roboto, sans-serif;
    font-size: 13px;
    color: #4263c4;
}

/* font preview */
.preview {
    top: 104px;
    left: 111px;
    width: 60%;
    height: 518px;
    border-color: #a5a5a5;
}

.preview-title {
    height: 30px;
    padding: 5px 8px;
}

.preview-bar {
    height: 42px;
    padding: 8px 6px;
    background: #f0f0f0;
    border-bottom: 1px solid #333;
}

.preview-bar button {
    padding: 0 8px;
    height: 26px;
    background: #e1e1e1;
    border: 1px solid #adadad;
}

.preview-meta {
    padding: 2px 1px;
    line-height: 17px;
    border-bottom: 1px solid #333;
}

.preview-sample {
    padding: 4px 1px;
    border-bottom: 1px solid #333;
    font-family: "Liberation Sans", Arial, sans-serif;
    font-size: 20px;
    font-weight: 700;
    line-height: 25px;
}

.preview-sizes li {
    display: flex;
    align-items: flex-end;
    padding-left: 1px;
}

.s12 { height: 25px; }
.s18 { height: 28px; }
.s24 { height: 37px; }
.s36 { height: 54px; }
.s48 { height: 73px; }
.s60 { height: 93px; }

/* fonts folder */
.fonts {
    inset: 86px 40px 49px 198px;
    border-color: #999;
}

.fonts-nav {
    display: flex;
    justify-content: flex-end;
    padding: 5px 12px;
}

.fonts-nav input {
    width: 200px;
    height: 30px;
    border: 1px solid #d9d9d9;
}

.fonts-head {
    height: 54px;
    padding: 24px 65px 0;
    text-align: right;
}

.fonts-tools {
    display: flex;
    align-items: center;
    justify-content: flex-end;
    gap: 30px;
    height: 33px;
    padding-right: 15px;
    background: #f5f6f7;
}

.help {
    width: 16px;
    height: 16px;
    border-radius: 50%;
    background: #0a66b8;
    color: #fff;
    font-weight: 700;
}

.fonts-body {
    flex: 1;
    display: flex;
    min-height: 0;
    overflow: hidden;
}

.fonts-list {
    flex: 1;
    display: flex;
    flex-direction: column;
    align-items: flex-end;
    padding: 6px 9px 0 0;
}

.font {
    flex: none;
    width: 96px;
    min-height: 120px;
    padding-top: 6px;
    text-align: center;
}

.font.selected {
    height: 131px;
    background: #d9d9d9;
}

.font-icon {
    display: grid;
    height: 84px;
    margin-bottom: 8px;
}

.font-icon svg,
.glyph {
    grid-area: 1 / 1;
    width: 84px;
    height: 84px;
    justify-self: center;
}

.glyph {
    font-size: 24px;
    line-height: 94px;
}

.glyph.serif {
    font-family: "Liberation Serif", serif;
}

.glyph.bold {
    font-weight: 700;
}

.font figcaption {
    padding-right: 6px;
    font-size: 11px;
    line-height: 15px;
}

.fonts-details {
    height: 58px;
    background: #f0f3fc;
    border-top: 1px solid #dde6ee;
}

/* scrollbars */
.scrollbar {
    display: flex;
    flex-direction: column;
    width: 16px;
    background: #f0f0f0;
}

.track {
    flex: 1;
}

.thumb {
    background: #cdcdcd;
}

.thumb-short {
    height: 18%;
}

.thumb-long {
    height: 87%;
}

/* control panel */
.control-panel {
    inset: 74px 109px 61px 129px;
    border-color: #555;
    font-size: 11px;
    color: #000;
}

.nav-bar {
    display: flex;
    align-items: center;
    height: 40px;
    padding: 0 12px;
}

.history {
    display: flex;
    align-items: center;
    gap: 11px;
    width: 94px;
}

.history button:nth-child(1) {
    margin-right: 4px;
}

.address,
.search {
    display: flex;
    align-items: center;
    height: 30px;
    border: 1px solid #d9d9d9;
}

.address {
    flex: 1;
    gap: 7px;
    margin-right: 12px;
    padding-left: 2px;
}

.previous {
    width: 14px;
    margin-left: auto;
}

.refresh {
    width: 33px;
    height: 28px;
    border-left: 1px solid #d9d9d9;
}

.search {
    width: 202px;
    padding: 0 8px;
}

.search input {
    flex: 1;
    min-width: 0;
}

.search input::placeholder {
    color: #6d6d6d;
    opacity: 1;
}

.heading {
    display: flex;
    align-items: center;
    height: 63px;
    margin: 0 16px 0 14px;
    padding: 2px 68px 0 3px;
    border-bottom: 1px solid #dbe3e8;
}

.heading h1 {
    flex: 1;
    font-size: 15px;
    font-weight: 400;
    line-height: 20px;
    color: #1f3a80;
}

.view {
    display: flex;
    align-items: center;
    padding-top: 2px;
    color: #1a5ba5;
}

.view label {
    margin-right: 13px;
    color: #666;
}

.view select {
    appearance: none;
    margin-right: 5px;
}

.panel-body {
    flex: 1;
    display: flex;
    min-height: 0;
}

.items {
    flex: 1;
    display: grid;
    grid-template-columns: repeat(3, 1fr);
    grid-auto-rows: 50px;
    column-gap: 7px;
    padding: 24px 10px 0 15px;
    overflow: hidden;
}

.item {
    position: relative;
    display: flex;
    align-items: center;
    gap: 11px;
    padding-left: 4px;
    font-size: 15px;
    line-height: 21px;
    color: #1e6b2c;
    white-space: nowrap;
}

.item.hover {
    background: #e7f2fc;
}

.icon {
    width: 32px;
    height: 32px;
}

.cursor {
    position: absolute;
    top: 8px;
    left: 157px;
    width: 14px;
    height: 22px;
}

/* taskbar */
.taskbar {
    flex: none;
    display: flex;
    height: 40px;
    background: linear-gradient(90deg, #03141f, #030c1e);
    color: #fff;
}

.running {
    display: flex;
    gap: 1px;
    padding-left: 3px;
}

.task {
    display: flex;
    align-items: center;
    justify-content: center;
    width: 48px;
    height: 40px;
}

.task.open {
    background: linear-gradient(#76b9ed, #76b9ed) center bottom / 40px 2px no-repeat;
}

.task.attention {
    background: #a05c26;
    border-bottom: 2px solid #f5841f;
}

.task.current {
    background: #2f3f4d;
    border-bottom: 2px solid #76b9ed;
}

.tray {
    display: flex;
    align-items: center;
    gap: 8px;
    margin-left: auto;
}

.clock {
    display: flex;
    flex-direction: column;
    align-items: center;
    width: 54px;
    font-size: 11px;
    line-height: 18px;
    white-space: nowrap;
}

.notices {
    position: relative;
    margin: 0 12px 0 10px;
}

.badge {
    position: absolute;
    top: 6px;
    left: 7px;
    width: 16px;
    height: 16px;
    border: 1px solid #888;
    border-radius: 50%;
    background: #2a3038;
    font-size: 11px;
    line-height: 14px;
}

.show-desktop {
    width: 5px;
    height: 40px;
    border-left: 1px solid #56606c;
}
```
